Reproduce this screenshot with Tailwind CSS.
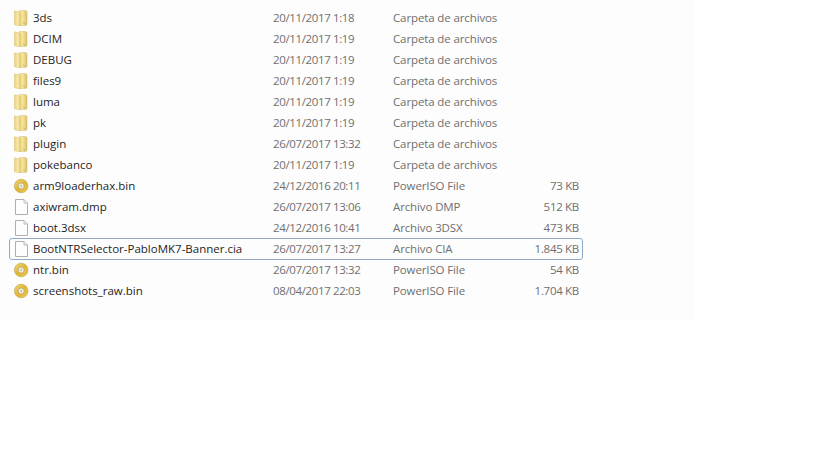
<!DOCTYPE html>
<html lang="es">
<head>
  <meta charset="UTF-8">
  <title>Carpeta</title>
  <script src="https://cdn.jsdelivr.net/npm/@tailwindcss/browser@4"></script>
</head>
<body class="bg-white h-[460px] overflow-hidden font-['Open_Sans',sans-serif] text-[11.5px] leading-[20px] text-[#6f6f6f]">
  <svg width="0" height="0" class="absolute">
    <defs>
      <linearGradient id="fold" x1="0" y1="0" x2="1" y2="0">
        <stop offset="0" stop-color="#ead27e"/>
        <stop offset="0.5" stop-color="#f6e9a8"/>
        <stop offset="1" stop-color="#e2c86e"/>
      </linearGradient>
      <linearGradient id="back" x1="0" y1="0" x2="1" y2="0">
        <stop offset="0" stop-color="#fbf4c8"/>
        <stop offset="0.6" stop-color="#f1dd8e"/>
        <stop offset="1" stop-color="#d9bd66"/>
      </linearGradient>
      <linearGradient id="gold" x1="0" y1="0" x2="1" y2="1">
        <stop offset="0" stop-color="#f3d978"/>
        <stop offset="0.5" stop-color="#e2b52e"/>
        <stop offset="1" stop-color="#eccb55"/>
      </linearGradient>
      <symbol id="folder" viewBox="0 0 16 16">
        <path d="M5 .6H12L13 1.6V14.6L12 15.4H5z" fill="url(#back)" stroke="#d4bb6c" stroke-width=".5"/>
        <path d="M.5 .8L6.8 2.4V15.8L.5 14.8z" fill="url(#fold)" stroke="#d8bf6c" stroke-width=".5"/>
        <path d="M9.6 12.6l.9 1.6" stroke="#8aa084" stroke-width=".8"/>
      </symbol>
      <symbol id="disc" viewBox="0 0 16 16">
        <circle cx="7.2" cy="8" r="6.8" fill="url(#gold)" stroke="#bfa04a" stroke-width=".6"/>
        <circle cx="7.2" cy="8" r="3" fill="#f7f2dc" stroke="#a59f88" stroke-width=".7"/>
        <circle cx="7.2" cy="8" r="1.2" fill="#c9c4ac"/>
      </symbol>
      <symbol id="file" viewBox="0 0 16 16">
        <path d="M1.5 .5H10L13.5 4V15.5H1.5z" fill="#fdfdfd" stroke="#aeaeae"/>
        <path d="M10 .5V4H13.5" fill="#f1f1f1" stroke="#bababa"/>
      </symbol>
    </defs>
  </svg>

  <main class="w-[694px] h-[320px] bg-[#fdfdfd] pt-[7px] pl-[9px]">
    <ul class="w-[574px]">
      <li class="h-[21px] flex items-center"><svg class="w-4 h-4 ml-[5px] mr-[3px] shrink-0"><use href="#folder"/></svg><span class="w-[240px] text-[#1e1e1e]">3ds</span><span class="w-[120px] tracking-[-0.37px]">20/11/2017 1:18</span><span class="tracking-[-0.12px]">Carpeta de archivos</span></li>
      <li class="h-[21px] flex items-center"><svg class="w-4 h-4 ml-[5px] mr-[3px] shrink-0"><use href="#folder"/></svg><span class="w-[240px] text-[#1e1e1e]">DCIM</span><span class="w-[120px] tracking-[-0.37px]">20/11/2017 1:19</span><span class="tracking-[-0.12px]">Carpeta de archivos</span></li>
      <li class="h-[21px] flex items-center"><svg class="w-4 h-4 ml-[5px] mr-[3px] shrink-0"><use href="#folder"/></svg><span class="w-[240px] text-[#1e1e1e]">DEBUG</span><span class="w-[120px] tracking-[-0.37px]">20/11/2017 1:19</span><span class="tracking-[-0.12px]">Carpeta de archivos</span></li>
      <li class="h-[21px] flex items-center"><svg class="w-4 h-4 ml-[5px] mr-[3px] shrink-0"><use href="#folder"/></svg><span class="w-[240px] text-[#1e1e1e]">files9</span><span class="w-[120px] tracking-[-0.37px]">20/11/2017 1:19</span><span class="tracking-[-0.12px]">Carpeta de archivos</span></li>
      <li class="h-[21px] flex items-center"><svg class="w-4 h-4 ml-[5px] mr-[3px] shrink-0"><use href="#folder"/></svg><span class="w-[240px] text-[#1e1e1e]">luma</span><span class="w-[120px] tracking-[-0.37px]">20/11/2017 1:19</span><span class="tracking-[-0.12px]">Carpeta de archivos</span></li>
      <li class="h-[21px] flex items-center"><svg class="w-4 h-4 ml-[5px] mr-[3px] shrink-0"><use href="#folder"/></svg><span class="w-[240px] text-[#1e1e1e]">pk</span><span class="w-[120px] tracking-[-0.37px]">20/11/2017 1:19</span><span class="tracking-[-0.12px]">Carpeta de archivos</span></li>
      <li class="h-[21px] flex items-center"><svg class="w-4 h-4 ml-[5px] mr-[3px] shrink-0"><use href="#folder"/></svg><span class="w-[240px] text-[#1e1e1e]">plugin</span><span class="w-[120px] tracking-[-0.37px]">26/07/2017 13:32</span><span class="tracking-[-0.12px]">Carpeta de archivos</span></li>
      <li class="h-[21px] flex items-center"><svg class="w-4 h-4 ml-[5px] mr-[3px] shrink-0"><use href="#folder"/></svg><span class="w-[240px] text-[#1e1e1e]">pokebanco</span><span class="w-[120px] tracking-[-0.37px]">20/11/2017 1:19</span><span class="tracking-[-0.12px]">Carpeta de archivos</span></li>
      <li class="h-[21px] flex items-center"><svg class="w-4 h-4 ml-[5px] mr-[3px] shrink-0"><use href="#disc"/></svg><span class="w-[240px] text-[#1e1e1e]">arm9loaderhax.bin</span><span class="w-[120px] tracking-[-0.37px]">24/12/2016 20:11</span><span class="w-[120px] tracking-[-0.12px]">PowerISO File</span><span class="w-[66px] text-right tracking-[-0.3px]">73 KB</span></li>
      <li class="h-[21px] flex items-center"><svg class="w-4 h-4 ml-[5px] mr-[3px] shrink-0"><use href="#file"/></svg><span class="w-[240px] text-[#1e1e1e]">axiwram.dmp</span><span class="w-[120px] tracking-[-0.37px]">26/07/2017 13:06</span><span class="w-[120px] tracking-[-0.12px]">Archivo DMP</span><span class="w-[66px] text-right tracking-[-0.3px]">512 KB</span></li>
      <li class="h-[21px] flex items-center"><svg class="w-4 h-4 ml-[5px] mr-[3px] shrink-0"><use href="#file"/></svg><span class="w-[240px] text-[#1e1e1e]">boot.3dsx</span><span class="w-[120px] tracking-[-0.37px]">24/12/2016 10:41</span><span class="w-[120px] tracking-[-0.12px]">Archivo 3DSX</span><span class="w-[66px] text-right tracking-[-0.3px]">473 KB</span></li>
      <li class="relative h-[21px] flex items-center"><span class="absolute inset-x-0 top-0 -bottom-px border border-[#8fa9c4] rounded-[3px]"></span><svg class="w-4 h-4 ml-[5px] mr-[3px] shrink-0"><use href="#file"/></svg><span class="w-[240px] text-[#1e1e1e]">BootNTRSelector-PabloMK7-Banner.cia</span><span class="w-[120px] tracking-[-0.37px]">26/07/2017 13:27</span><span class="w-[120px] tracking-[-0.12px]">Archivo CIA</span><span class="w-[66px] text-right tracking-[-0.3px]">1.845 KB</span></li>
      <li class="h-[21px] flex items-center"><svg class="w-4 h-4 ml-[5px] mr-[3px] shrink-0"><use href="#disc"/></svg><span class="w-[240px] text-[#1e1e1e]">ntr.bin</span><span class="w-[120px] tracking-[-0.37px]">26/07/2017 13:32</span><span class="w-[120px] tracking-[-0.12px]">PowerISO File</span><span class="w-[66px] text-right tracking-[-0.3px]">54 KB</span></li>
      <li class="h-[21px] flex items-center"><svg class="w-4 h-4 ml-[5px] mr-[3px] shrink-0"><use href="#disc"/></svg><span class="w-[240px] text-[#1e1e1e]">screenshots_raw.bin</span><span class="w-[120px] tracking-[-0.37px]">08/04/2017 22:03</span><span class="w-[120px] tracking-[-0.12px]">PowerISO File</span><span class="w-[66px] text-right tracking-[-0.3px]">1.704 KB</span></li>
    </ul>
  </main>
</body>
</html>
